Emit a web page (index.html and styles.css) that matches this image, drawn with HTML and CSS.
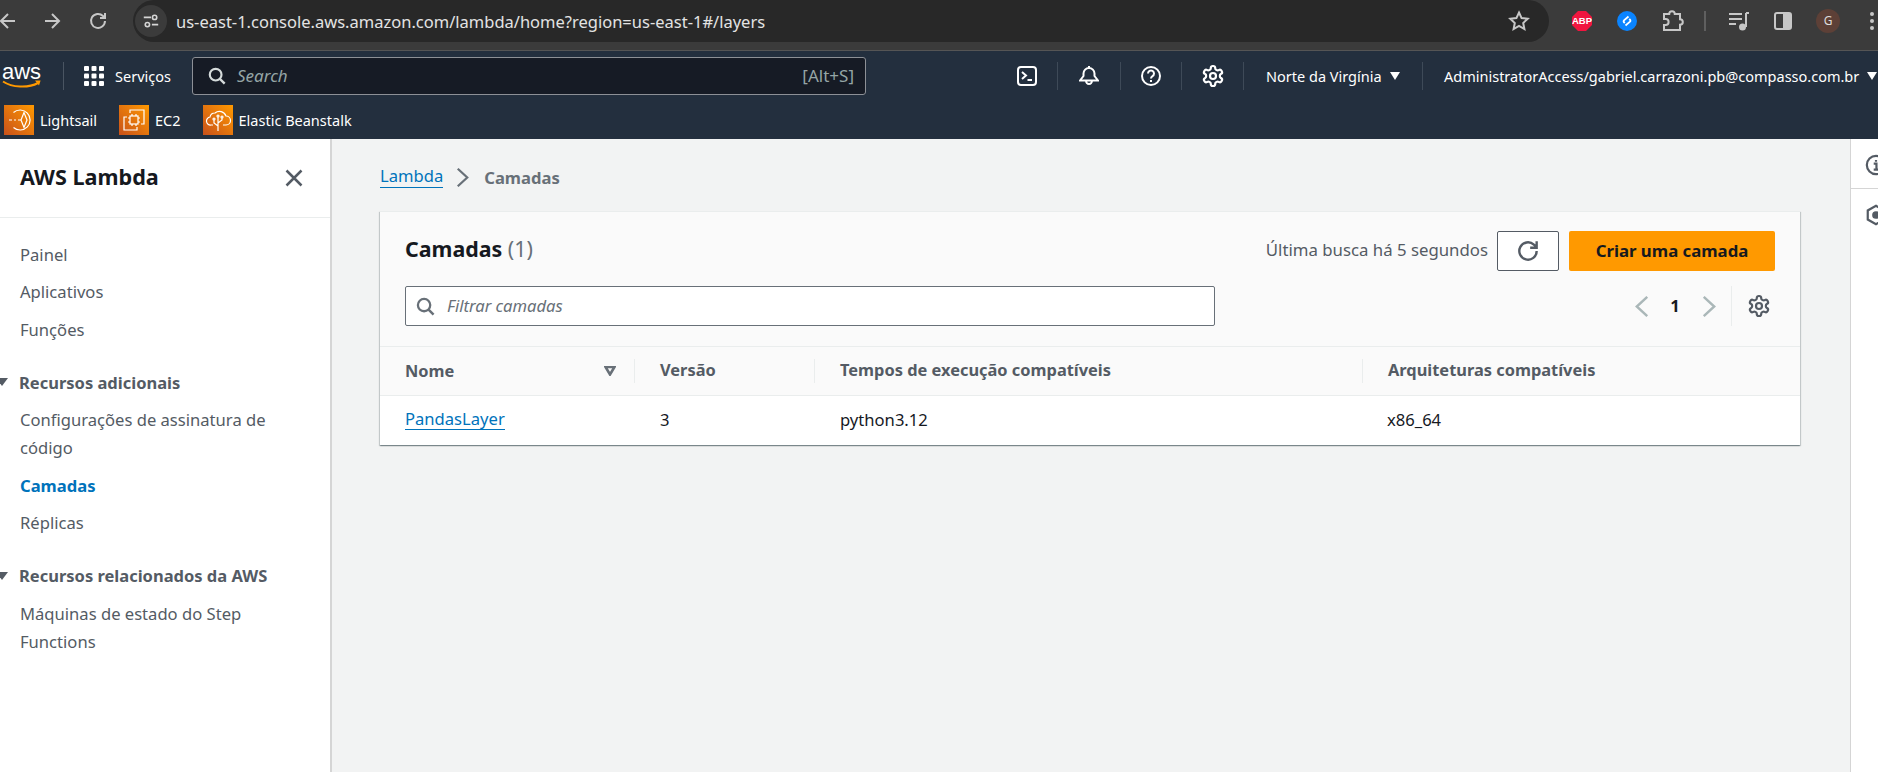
FILE: index.html
```html
<!DOCTYPE html>
<html lang="en">
<head>
  <meta charset="UTF-8" />
  <title>Camadas | AWS Lambda</title>
  <link rel="stylesheet" href="styles.css">
</head>
<body>
  <svg class="defs" aria-hidden="true">
    <symbol id="gear" viewBox="0 0 24 24">
      <path fill="none" stroke="currentColor" stroke-width="2.2" d="M12.22 2h-.44a2 2 0 0 0-2 2v.18a2 2 0 0 1-1 1.73l-.43.25a2 2 0 0 1-2 0l-.15-.08a2 2 0 0 0-2.73.73l-.22.38a2 2 0 0 0 .73 2.73l.15.1a2 2 0 0 1 1 1.72v.51a2 2 0 0 1-1 1.74l-.15.09a2 2 0 0 0-.73 2.73l.22.38a2 2 0 0 0 2.73.73l.15-.08a2 2 0 0 1 2 0l.43.25a2 2 0 0 1 1 1.73V20a2 2 0 0 0 2 2h.44a2 2 0 0 0 2-2v-.18a2 2 0 0 1 1-1.73l.43-.25a2 2 0 0 1 2 0l.15.08a2 2 0 0 0 2.73-.73l.22-.39a2 2 0 0 0-.73-2.73l-.15-.08a2 2 0 0 1-1-1.74v-.5a2 2 0 0 1 1-1.74l.15-.09a2 2 0 0 0 .73-2.73l-.22-.38a2 2 0 0 0-2.73-.73l-.15.08a2 2 0 0 1-2 0l-.43-.25a2 2 0 0 1-1-1.73V4a2 2 0 0 0-2-2z"/>
      <circle cx="12" cy="12" r="3" fill="none" stroke="currentColor" stroke-width="2.2"/>
    </symbol>
    <symbol id="lens" viewBox="0 0 20 20">
      <circle cx="8.5" cy="8.5" r="6.5" fill="none" stroke="currentColor" stroke-width="2.4"/>
      <path d="M13.2 13.2 18.5 18.5" fill="none" stroke="currentColor" stroke-width="2.6"/>
    </symbol>
    <symbol id="chev" viewBox="0 0 16 24">
      <path d="M2 1 14 12 2 23" fill="none" stroke="currentColor" stroke-width="2.8"/>
    </symbol>
  </svg>

  <div class="browser-bar">
    <div class="browser-nav">
      <svg class="b-icon" viewBox="0 0 24 24"><path d="M19 12H5M12 5l-7 7 7 7"/></svg>
      <svg class="b-icon" viewBox="0 0 24 24"><path d="M5 12h14M12 5l7 7-7 7"/></svg>
      <svg class="b-icon" viewBox="0 0 24 24"><path d="M19 12a7 7 0 1 1-2-5l2 2M19 4v5h-5"/></svg>
    </div>
    <div class="omnibox">
      <span class="site-chip">
        <svg class="chip-icon" viewBox="0 0 20 20"><path d="M2 6h8M11 14h7"/><circle cx="14" cy="6" r="2.4"/><circle cx="6" cy="14" r="2.4"/></svg>
      </span>
      <span class="url">us-east-1.console.aws.amazon.com/lambda/home?region=us-east-1#/layers</span>
      <svg class="b-icon star" viewBox="0 0 24 24"><path d="M12 3.5l2.6 5.6 6.1.7-4.5 4.2 1.2 6-5.4-3-5.4 3 1.2-6-4.5-4.2 6.1-.7z"/></svg>
    </div>
    <div class="browser-tools">
      <span class="abp">ABP</span>
      <span class="shazam">
        <svg viewBox="0 0 20 20"><path d="M11.5 5.5 7 9.300a1.400 1.400 0 0 0 0 2l.8.7M8.500 14.500 13 10.700a1.400 1.400 0 0 0 0-2l-.8-.7"/></svg>
      </span>
      <svg class="b-icon puzzle" viewBox="0 0 24 24"><path d="M4 5h5.200a2.800 2.800 0 0 1 5.600 0H20v5.200a2.800 2.800 0 0 1 0 5.600V21H4v-5h1.600a3 3 0 0 0 0-6H4z"/></svg>
      <span class="tool-sep"></span>
      <svg class="b-icon media" viewBox="0 0 24 24"><path d="M2 5h13M2 10h13M2 15h7M19 4v14"/><circle class="solid" cx="15.5" cy="18" r="3.5"/><path d="M19 4h3"/></svg>
      <svg class="b-icon panel" viewBox="0 0 24 24"><rect x="4" y="4" width="16" height="16" rx="2"/><rect class="solid" x="12" y="4" width="8" height="16"/></svg>
      <span class="avatar">G</span>
      <span class="dots"><i></i><i></i><i></i></span>
    </div>
  </div>

  <header class="aws-nav">
    <div class="nav-main">
      <a class="aws-logo">
        <span class="aws-word">aws</span>
        <svg class="aws-smile" viewBox="0 0 40 9"><path d="M1 1.5c9 6 25 7 35 1.5" fill="none" stroke="#f90" stroke-width="2"/><path d="M33 .6 38.6.4 37 5.4z" fill="#f90"/></svg>
      </a>
      <span class="logo-sep"></span>
      <svg class="grid-icon" viewBox="0 0 20 20"><g fill="#fff"><rect x="0" y="0" width="5" height="5" rx="1"/><rect x="7.5" y="0" width="5" height="5" rx="1"/><rect x="15" y="0" width="5" height="5" rx="1"/><rect x="0" y="7.5" width="5" height="5" rx="1"/><rect x="7.5" y="7.5" width="5" height="5" rx="1"/><rect x="15" y="7.5" width="5" height="5" rx="1"/><rect x="0" y="15" width="5" height="5" rx="1"/><rect x="7.5" y="15" width="5" height="5" rx="1"/><rect x="15" y="15" width="5" height="5" rx="1"/></g></svg>
      <span class="services">Serviços</span>
      <div class="top-search">
        <svg class="top-lens"><use href="#lens"/></svg>
        <span class="top-search-text">Search</span>
        <span class="top-search-key">[Alt+S]</span>
      </div>
      <div class="nav-cell first-cell">
        <svg class="nav-icon" viewBox="0 0 20 20"><rect x="1" y="1" width="18" height="18" rx="3"/><path d="M5 6l4 3.5L5 13M10.5 14H15"/></svg>
      </div>
      <div class="nav-cell bell-cell">
        <svg class="nav-icon" viewBox="0 0 20 20"><path d="M1 14.5 4.500 10V7.500a5.500 5.500 0 0 1 11 0V10l3.500 4.500zM7 14.500a3 3.500 0 0 0 6 0M10 0v2"/></svg>
      </div>
      <div class="nav-cell help-cell">
        <svg class="nav-icon" viewBox="0 0 20 20"><circle cx="10" cy="10" r="9"/><path d="M7 7.5a3 3 0 1 1 4.500 2.600c-1 .6-1.500 1.100-1.500 2.400M10 14v2"/></svg>
      </div>
      <div class="nav-cell gear-cell">
        <svg class="nav-gear"><use href="#gear"/></svg>
      </div>
      <div class="nav-cell region-cell">Norte da Virgínia <span class="caret"></span></div>
      <div class="account">AdministratorAccess/gabriel.carrazoni.pb@compasso.com.br <span class="caret"></span></div>
    </div>
    <div class="nav-shortcuts">
      <a class="shortcut">
        <svg class="svc" viewBox="0 0 30 30"><defs><linearGradient id="svcgrad" x1="0" y1="1" x2="1" y2="0"><stop offset="0" stop-color="#c8511b"/><stop offset="1" stop-color="#f90"/></linearGradient></defs><rect width="30" height="30" fill="url(#svcgrad)"/><g fill="none" stroke="#fff" stroke-width="1.2"><path d="M9.5 7.5a10 10 0 1 1 0 15M5 15h3M10 15h2M14 15h3"/><path d="M20 7.5 17 15l3 7.500 3-7.500z"/></g></svg>
        Lightsail
      </a>
      <a class="shortcut">
        <svg class="svc" viewBox="0 0 30 30"><rect width="30" height="30" fill="url(#svcgrad)"/><g fill="none" stroke="#fff" stroke-width="1.2"><path d="M11 8V5h14v14h-3M8 12H5v13h13v-3"/><rect x="11" y="11" width="8" height="8"/><path d="M13 9v2M17 9v2M13 19v2M17 19v2M9 13h2M9 17h2M19 13h2M19 17h2"/></g></svg>
        EC2
      </a>
      <a class="shortcut">
        <svg class="svc" viewBox="0 0 30 30"><rect width="30" height="30" fill="url(#svcgrad)"/><g fill="none" stroke="#fff" stroke-width="1.2"><path d="M10 20H8a4 4 0 0 1-1-8 5 5 0 0 1 5-4 7 7 0 0 1 11 3 4.500 4.500 0 0 1 0 9h-3"/><path d="M15 26V12M15 21l-4-3v-3M15 18l4-3v-2"/><circle cx="11" cy="14" r="1"/><circle cx="19" cy="12" r="1"/><circle cx="15" cy="11" r="1"/></g></svg>
        Elastic Beanstalk
      </a>
    </div>
  </header>

  <div class="layout">
    <aside class="sidebar">
      <div class="side-head">
        <h2>AWS Lambda</h2>
        <svg class="close" viewBox="0 0 16 16"><path d="M2 2l12 12M14 2 2 14"/></svg>
      </div>
      <nav class="side-nav">
        <ul class="side-list">
          <li><a>Painel</a></li>
          <li><a>Aplicativos</a></li>
          <li><a>Funções</a></li>
        </ul>
        <h3 class="side-group"><span class="side-caret"></span>Recursos adicionais</h3>
        <ul class="side-list">
          <li><a>Configurações de assinatura de código</a></li>
          <li><a class="active">Camadas</a></li>
          <li><a>Réplicas</a></li>
        </ul>
        <h3 class="side-group"><span class="side-caret"></span>Recursos relacionados da AWS</h3>
        <ul class="side-list">
          <li><a>Máquinas de estado do Step Functions</a></li>
        </ul>
      </nav>
    </aside>

    <main class="content">
      <div class="crumbs">
        <a class="link">Lambda</a>
        <svg class="crumb-chev"><use href="#chev"/></svg>
        <span class="crumb-current">Camadas</span>
      </div>

      <section class="card">
        <div class="card-head">
          <div class="head-row">
            <h1 class="card-title">Camadas <span class="count">(1)</span></h1>
            <div class="head-actions">
              <span class="last-fetch">Última busca há 5 segundos</span>
              <button class="btn-refresh">
                <svg viewBox="0 0 24 24"><path d="M20 12a8 8 0 1 1-2.6-5.900L20 8.500M20 3v6h-6"/></svg>
              </button>
              <button class="btn-primary">Criar uma camada</button>
            </div>
          </div>
          <div class="filter-row">
            <div class="filter">
              <svg class="filter-lens"><use href="#lens"/></svg>
              <span class="filter-text">Filtrar camadas</span>
            </div>
            <div class="pager">
              <svg class="pager-chev prev"><use href="#chev"/></svg>
              <span class="page-num">1</span>
              <svg class="pager-chev next"><use href="#chev"/></svg>
              <span class="pager-sep"></span>
              <svg class="pager-gear"><use href="#gear"/></svg>
            </div>
          </div>
        </div>
        <div class="table-row table-head">
          <div class="th"><span class="th-first">Nome <svg class="sort" viewBox="0 0 12 10"><path d="M1.5 1h9L6 8.500z"/></svg></span></div>
          <div class="th"><span class="th-in">Versão</span></div>
          <div class="th"><span class="th-in">Tempos de execução compatíveis</span></div>
          <div class="th"><span class="th-in">Arquiteturas compatíveis</span></div>
        </div>
        <div class="table-row table-body">
          <div class="td"><a class="link">PandasLayer</a></div>
          <div class="td">3</div>
          <div class="td">python3.12</div>
          <div class="td">x86_64</div>
        </div>
      </section>
    </main>

    <aside class="rail">
      <div class="rail-top">
        <svg class="rail-icon" viewBox="0 0 24 24"><circle cx="12" cy="12" r="10"/><path d="M9.5 10.500H12.500V17M9.500 17h6M12 6.500v2"/></svg>
      </div>
      <div class="rail-bottom">
        <svg class="rail-icon" viewBox="0 0 24 24"><path d="M12 2l9 5v10l-9 5-9-5V7z"/><circle class="rail-dot" cx="12" cy="12" r="3"/></svg>
      </div>
    </aside>
  </div>
</body>
</html>
```

FILE: styles.css
```css
* {
  box-sizing: border-box;
}

body {
  margin: 0;
  height: 100vh;
  overflow: hidden;
  display: flex;
  flex-direction: column;
  font-family: "Noto Sans", Arial, sans-serif;
  font-size: 16.6px;
  color: #16191f;
  background: #f2f3f3;
}

.defs {
  display: none;
}

/* browser chrome */
.browser-bar {
  height: 51px;
  flex: none;
  display: flex;
  align-items: flex-start;
  background: #3b3b3b;
  border-bottom: 1px solid #555;
}

.browser-nav {
  display: flex;
  align-items: center;
  gap: 20px;
  height: 42px;
  margin-left: -4px;
  flex: none;
}

.browser-nav .b-icon:last-child {
  margin-left: 2px;
}

.b-icon {
  width: 24px;
  height: 24px;
  flex: none;
  fill: none;
  stroke: #c7c7c7;
  stroke-width: 2;
}

.b-icon .solid {
  fill: #c7c7c7;
  stroke: none;
}

.omnibox {
  width: 1416px;
  height: 42px;
  margin-left: 23px;
  flex: none;
  display: flex;
  align-items: center;
  padding: 0 18px 0 2px;
  background: #282828;
  border-radius: 21px;
}

.site-chip {
  width: 32px;
  height: 32px;
  border-radius: 50%;
  background: #3b3b3b;
  display: flex;
  align-items: center;
  justify-content: center;
  flex: none;
}

.chip-icon {
  width: 18px;
  height: 18px;
  fill: none;
  stroke: #d5d5d5;
  stroke-width: 1.8;
}

.url {
  margin-left: 9px;
  flex: 1;
  color: #e3e3e3;
  font-size: 16.5px;
  white-space: nowrap;
}

.browser-tools {
  display: flex;
  align-items: center;
  height: 42px;
  margin-left: 23px;
}

.abp {
  width: 20px;
  height: 20px;
  background: #f1153f;
  color: #fff;
  font-family: "Liberation Sans", Arial, sans-serif;
  font-size: 9.5px;
  font-weight: 700;
  line-height: 20px;
  text-align: center;
  clip-path: polygon(30% 0, 70% 0, 100% 30%, 100% 70%, 70% 100%, 30% 100%, 0 70%, 0 30%);
}

.shazam {
  width: 20px;
  height: 20px;
  margin-left: 25px;
  border-radius: 50%;
  background: #0a84ff;
}

.shazam svg {
  display: block;
  fill: none;
  stroke: #fff;
  stroke-width: 1.8;
}

.puzzle {
  margin-left: 23px;
}

.tool-sep {
  width: 2px;
  height: 20px;
  margin-left: 20px;
  background: #5f5f5f;
}

.media {
  margin-left: 21px;
}

.panel {
  margin-left: 20px;
}

.avatar {
  width: 24px;
  height: 24px;
  margin-left: 21px;
  border-radius: 50%;
  background: #5d4037;
  color: #ddd;
  font-size: 12px;
  line-height: 24px;
  text-align: center;
}

.dots {
  margin-left: 30px;
  display: flex;
  flex-direction: column;
  gap: 3px;
}

.dots i {
  width: 4px;
  height: 4px;
  border-radius: 50%;
  background: #c7c7c7;
}

/* aws console bar */
.aws-nav {
  height: 88px;
  flex: none;
  background: #232f3e;
  color: #fff;
}

.nav-main {
  height: 50px;
  display: flex;
  align-items: center;
  white-space: nowrap;
  font-size: 14.5px;
}

.aws-logo {
  margin-left: 2px;
  width: 40px;
  flex: none;
  display: flex;
  flex-direction: column;
}

.aws-word {
  font-family: "Liberation Sans", Arial, sans-serif;
  font-size: 22px;
  line-height: 17px;
  height: 17px;
}

.aws-smile {
  display: block;
  width: 40px;
  height: 9px;
}

.logo-sep {
  width: 1px;
  height: 28px;
  margin-left: 21px;
  background: #4a5562;
  flex: none;
}

.grid-icon {
  width: 20px;
  height: 20px;
  margin-left: 20px;
  flex: none;
}

.services {
  margin-left: 11px;
  width: 77px;
  flex: none;
}

.top-search {
  width: 674px;
  height: 38px;
  flex: none;
  display: flex;
  align-items: center;
  padding: 0 11px 0 15px;
  background: #161b25;
  border: 1px solid #8d9096;
  border-radius: 3px;
  color: #95a5a6;
  font-size: 17px;
}

.top-lens {
  width: 18px;
  height: 18px;
  color: #d5dbdb;
  flex: none;
}

.top-search-text {
  margin: 0 0 2px 11px;
  flex: 1;
  font-style: italic;
}

.top-search-key {
  margin-bottom: 2px;
}

.nav-cell {
  height: 28px;
  flex: none;
  display: flex;
  align-items: center;
  justify-content: center;
  border-right: 1px solid #3e4a58;
}

.first-cell {
  margin-left: 131px;
  width: 61px;
}

.bell-cell {
  width: 63px;
}

.help-cell {
  width: 61px;
}

.gear-cell {
  width: 62px;
}

.region-cell {
  width: 179px;
  justify-content: flex-start;
  gap: 8px;
  padding-left: 22px;
}

.nav-icon {
  width: 20px;
  height: 20px;
  fill: none;
  stroke: #fff;
  stroke-width: 2;
}

.nav-gear {
  width: 24px;
  height: 24px;
  color: #fff;
}

.account {
  margin-left: 21px;
  display: flex;
  align-items: center;
  gap: 8px;
  flex: none;
}

.caret {
  width: 0;
  height: 0;
  border-left: 5.5px solid transparent;
  border-right: 5.5px solid transparent;
  border-top: 8px solid #fff;
}

.nav-shortcuts {
  display: flex;
  padding: 4px 0 0 4px;
  gap: 22px;
  font-size: 14.5px;
}

.shortcut {
  display: flex;
  align-items: center;
  gap: 6px;
}

.svc {
  width: 30px;
  height: 30px;
  flex: none;
}

/* page below the bars */
.layout {
  flex: 1;
  display: flex;
  min-height: 0;
}

.sidebar {
  width: 332px;
  flex: none;
  background: #fff;
  border-right: 2px solid #d5d5d5;
  color: #545b64;
}

.side-head {
  height: 79px;
  display: flex;
  align-items: center;
  justify-content: space-between;
  padding: 0 26px 0 20px;
  border-bottom: 1px solid #eaeded;
}

.side-head h2 {
  margin: 0 0 3px;
  font-size: 21.6px;
  font-weight: 700;
  color: #16191f;
}

.close {
  width: 20px;
  height: 20px;
  fill: none;
  stroke: #545b64;
  stroke-width: 2;
}

.side-nav {
  padding-top: 18px;
}

.side-list {
  list-style: none;
  margin: 0;
  padding: 0;
}

.side-list a {
  display: block;
  padding: 4.75px 30px 4.75px 20px;
  line-height: 28px;
}

.side-list a.active {
  color: #0073bb;
  font-weight: 700;
}

.side-group {
  display: flex;
  align-items: center;
  gap: 11px;
  height: 28px;
  margin: 19.5px 0 5.5px;
  font-size: 16.5px;
  font-weight: 700;
}

.side-caret {
  width: 0;
  height: 0;
  margin-left: -4px;
  border-left: 6px solid transparent;
  border-right: 6px solid transparent;
  border-top: 8px solid #545b64;
}

.content {
  flex: 1;
  padding: 26px 50px 0 48px;
  min-width: 0;
}

.crumbs {
  height: 24px;
  margin-bottom: 22px;
  display: flex;
  align-items: center;
}

.link {
  color: #0073bb;
  border-bottom: 1px solid #0073bb;
  line-height: 1.25;
}

.crumb-chev {
  width: 13px;
  height: 19px;
  margin: 0 15px 0 13px;
  color: #687078;
}

.crumb-current {
  color: #687078;
  font-weight: 700;
}

.card {
  background: #fff;
  box-shadow: 0 1px 1px 0 rgba(0, 28, 36, .3), 1px 1px 1px 0 rgba(0, 28, 36, .15), -1px 1px 1px 0 rgba(0, 28, 36, .15);
  border-top: 1px solid #eaeded;
}

.card-head {
  height: 135px;
  padding: 19px 25px 0;
  background: #fafafa;
  border-bottom: 1px solid #eaeded;
}

.head-row {
  display: flex;
  align-items: center;
  justify-content: space-between;
}

.card-title {
  margin: 0 0 5px;
  font-size: 21.4px;
  font-weight: 700;
}

.count {
  font-weight: 400;
  color: #687078;
}

.head-actions {
  display: flex;
  align-items: center;
}

.last-fetch {
  margin: 0 9px 3px 0;
  color: #545b64;
  font-size: 16.8px;
}

.btn-refresh {
  width: 62px;
  height: 40px;
  padding: 0;
  display: flex;
  align-items: center;
  justify-content: center;
  background: #fff;
  border: 1px solid #545b64;
  border-radius: 2px;
}

.btn-refresh svg {
  width: 26px;
  height: 26px;
  fill: none;
  stroke: #545b64;
  stroke-width: 2.2;
}

.btn-primary {
  width: 206px;
  height: 40px;
  margin-left: 10px;
  padding: 0 0 2px;
  background: #f90;
  border: none;
  border-radius: 2px;
  color: #16191f;
  font: 700 16.8px "Noto Sans", Arial, sans-serif;
}

.filter-row {
  margin-top: 15px;
  display: flex;
  align-items: center;
  justify-content: space-between;
}

.filter {
  width: 810px;
  height: 40px;
  display: flex;
  align-items: center;
  padding-left: 10px;
  background: #fff;
  border: 1px solid #687078;
  border-radius: 2px;
  color: #687078;
}

.filter-lens {
  width: 19px;
  height: 19px;
  flex: none;
  color: #687078;
}

.filter-text {
  margin: 0 0 2px 12px;
  font-style: italic;
}

.pager {
  height: 40px;
  margin-right: 4px;
  display: flex;
  align-items: center;
}

.pager-chev {
  width: 14px;
  height: 21px;
  color: #aab7b8;
}

.pager-chev.prev {
  transform: scaleX(-1);
}

.page-num {
  width: 20px;
  margin: 0 17px 2px 16px;
  font-weight: 700;
  text-align: center;
}

.pager-sep {
  width: 1px;
  height: 40px;
  margin: 0 15px;
  background: #eaeded;
}

.pager-gear {
  width: 24px;
  height: 24px;
  color: #545b64;
}

.table-row {
  display: grid;
  grid-template-columns: 254px 180px 548px 1fr;
}

.table-head {
  height: 49px;
  background: #fafafa;
  border-bottom: 1px solid #eaeded;
  color: #545b64;
  font-weight: 700;
  font-size: 16.4px;
}

.th {
  display: flex;
  align-items: center;
}

.th-first {
  flex: 1;
  display: flex;
  align-items: center;
  justify-content: space-between;
  height: 24px;
  padding: 0 18px 0 25px;
  line-height: 22px;
}

.th-in {
  flex: 1;
  height: 24px;
  line-height: 22px;
  padding-left: 25px;
  border-left: 1px solid #eaeded;
}

.sort {
  width: 12px;
  height: 10px;
  fill: none;
  stroke: #687078;
  stroke-width: 2.6;
}

.table-body {
  height: 49px;
}

.td {
  display: flex;
  align-items: center;
  padding: 0 0 3px 26px;
}

.td:nth-child(4) {
  padding-left: 25px;
}

.td:first-child {
  padding: 0 0 2px 25px;
}

.rail {
  width: 28px;
  flex: none;
  overflow: hidden;
  background: #fff;
  border-left: 1px solid #d5d5d5;
}

.rail-top {
  height: 50px;
  padding: 15px 0 0 14px;
  border-bottom: 1px solid #d5d5d5;
}

.rail-bottom {
  padding: 15px 0 0 14px;
}

.rail-icon {
  display: block;
  width: 22px;
  height: 22px;
  fill: none;
  stroke: #545b64;
  stroke-width: 2.4;
}

.rail-dot {
  fill: #545b64;
}
```
